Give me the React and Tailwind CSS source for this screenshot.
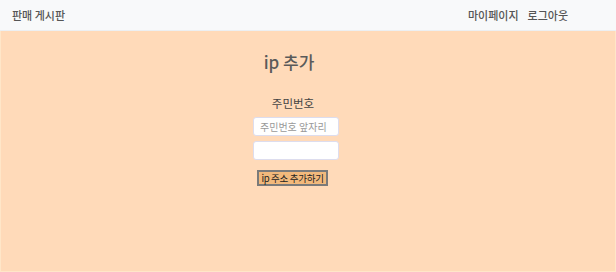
export default function App() {
  return (
    <div className="w-[616px] h-[272px] flex flex-col font-['Noto_Sans_CJK_KR',sans-serif] bg-[#ffdab9]">
      <nav className="h-[31px] shrink-0 flex items-center justify-between bg-[#f8f9fa] pl-3 pr-[48px] border-b border-[#eceff2]">
        <span className="text-[11px] font-medium text-[#555]">판매 게시판</span>
        <div className="flex gap-[9px] text-[11px] font-medium text-[#555]">
          <span>마이페이지</span>
          <span>로그아웃</span>
        </div>
      </nav>
      <main className="flex-1 border-x border-b border-[#ffe6c8] flex flex-col items-center pr-[24px]">
        <h2 className="mt-[18px] text-[17px] font-medium text-[#5a5a5a] leading-[26px] ml-[-14px]">ip 추가</h2>
        <label className="mt-[20px] text-[11.5px] text-[#444] leading-[16px] ml-[-6px]">주민번호</label>
        <input
          className="mt-[6px] w-[86px] h-[19px] bg-white border border-[#dde] rounded-[3px] px-[6px] text-[10px] placeholder:text-[#999] outline-none"
          placeholder="주민번호 앞자리"
        />
        <input className="mt-[5px] w-[86px] h-[19px] bg-white border border-[#dde] rounded-[3px] px-[6px] text-[10px] outline-none" />
        <button className="mt-[10px] h-[16px] px-[2px] ml-[-7px] bg-[#f2b97c] border-2 border-[#7a7a7a] text-[9.5px] text-[#222] leading-[12px] tracking-[-0.3px]">
          ip 주소 추가하기
        </button>
      </main>
    </div>
  );
}
